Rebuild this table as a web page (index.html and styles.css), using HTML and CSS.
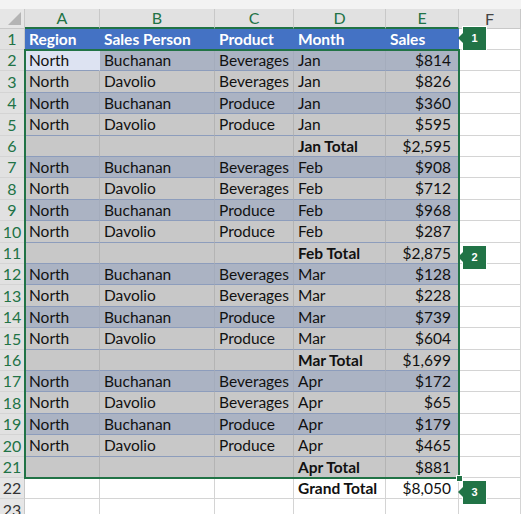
FILE: index.html
```html
<!DOCTYPE html>
<html>
<head>
<meta charset="utf-8">
<link rel="stylesheet" href="styles.css">
</head>
<body>
<div class="app">
  <div class="topbar"></div>
  <div class="sheet">
    <div class="row colhdr">
      <div class="corner"><span class="tri"></span></div>
      <div class="ch sel">A</div><div class="ch sel">B</div><div class="ch sel">C</div><div class="ch sel">D</div><div class="ch sel">E</div><div class="ch">F</div>
    </div>
    <div class="row title"><div class="rh sel">1</div><div class="c">Region</div><div class="c">Sales Person</div><div class="c">Product</div><div class="c">Month</div><div class="c">Sales</div><div class="c blank"></div></div>

    <div class="row dark"><div class="rh sel">2</div><div class="c active">North</div><div class="c">Buchanan</div><div class="c">Beverages</div><div class="c">Jan</div><div class="c num">$814</div><div class="c blank"></div></div>
    <div class="row light t"><div class="rh sel">3</div><div class="c">North</div><div class="c">Davolio</div><div class="c">Beverages</div><div class="c">Jan</div><div class="c num">$826</div><div class="c blank"></div></div>
    <div class="row dark"><div class="rh sel">4</div><div class="c">North</div><div class="c">Buchanan</div><div class="c">Produce</div><div class="c">Jan</div><div class="c num">$360</div><div class="c blank"></div></div>
    <div class="row light t"><div class="rh sel">5</div><div class="c">North</div><div class="c">Davolio</div><div class="c">Produce</div><div class="c">Jan</div><div class="c num">$595</div><div class="c blank"></div></div>
    <div class="row light"><div class="rh sel">6</div><div class="c"></div><div class="c"></div><div class="c"></div><div class="c b">Jan Total</div><div class="c num">$2,595</div><div class="c blank"></div></div>

    <div class="row dark"><div class="rh sel">7</div><div class="c">North</div><div class="c">Buchanan</div><div class="c">Beverages</div><div class="c">Feb</div><div class="c num">$908</div><div class="c blank"></div></div>
    <div class="row light t"><div class="rh sel">8</div><div class="c">North</div><div class="c">Davolio</div><div class="c">Beverages</div><div class="c">Feb</div><div class="c num">$712</div><div class="c blank"></div></div>
    <div class="row dark"><div class="rh sel">9</div><div class="c">North</div><div class="c">Buchanan</div><div class="c">Produce</div><div class="c">Feb</div><div class="c num">$968</div><div class="c blank"></div></div>
    <div class="row light t"><div class="rh sel">10</div><div class="c">North</div><div class="c">Davolio</div><div class="c">Produce</div><div class="c">Feb</div><div class="c num">$287</div><div class="c blank"></div></div>
    <div class="row light"><div class="rh sel">11</div><div class="c"></div><div class="c"></div><div class="c"></div><div class="c b">Feb Total</div><div class="c num">$2,875</div><div class="c blank"></div></div>

    <div class="row dark"><div class="rh sel">12</div><div class="c">North</div><div class="c">Buchanan</div><div class="c">Beverages</div><div class="c">Mar</div><div class="c num">$128</div><div class="c blank"></div></div>
    <div class="row light t"><div class="rh sel">13</div><div class="c">North</div><div class="c">Davolio</div><div class="c">Beverages</div><div class="c">Mar</div><div class="c num">$228</div><div class="c blank"></div></div>
    <div class="row dark"><div class="rh sel">14</div><div class="c">North</div><div class="c">Buchanan</div><div class="c">Produce</div><div class="c">Mar</div><div class="c num">$739</div><div class="c blank"></div></div>
    <div class="row light t"><div class="rh sel">15</div><div class="c">North</div><div class="c">Davolio</div><div class="c">Produce</div><div class="c">Mar</div><div class="c num">$604</div><div class="c blank"></div></div>
    <div class="row light"><div class="rh sel">16</div><div class="c"></div><div class="c"></div><div class="c"></div><div class="c b">Mar Total</div><div class="c num">$1,699</div><div class="c blank"></div></div>

    <div class="row dark"><div class="rh sel">17</div><div class="c">North</div><div class="c">Buchanan</div><div class="c">Beverages</div><div class="c">Apr</div><div class="c num">$172</div><div class="c blank"></div></div>
    <div class="row light t"><div class="rh sel">18</div><div class="c">North</div><div class="c">Davolio</div><div class="c">Beverages</div><div class="c">Apr</div><div class="c num">$65</div><div class="c blank"></div></div>
    <div class="row dark"><div class="rh sel">19</div><div class="c">North</div><div class="c">Buchanan</div><div class="c">Produce</div><div class="c">Apr</div><div class="c num">$179</div><div class="c blank"></div></div>
    <div class="row light t"><div class="rh sel">20</div><div class="c">North</div><div class="c">Davolio</div><div class="c">Produce</div><div class="c">Apr</div><div class="c num">$465</div><div class="c blank"></div></div>
    <div class="row light"><div class="rh sel">21</div><div class="c"></div><div class="c"></div><div class="c"></div><div class="c b">Apr Total</div><div class="c num">$881</div><div class="c blank"></div></div>

    <div class="row plain"><div class="rh">22</div><div class="c"></div><div class="c"></div><div class="c"></div><div class="c b">Grand Total</div><div class="c num">$8,050</div><div class="c"></div></div>
    <div class="row plain t"><div class="rh">23</div><div class="c"></div><div class="c"></div><div class="c"></div><div class="c"></div><div class="c"></div><div class="c"></div></div>

    <div class="selection"><span class="handle"></span></div>
    <div class="badge b1">1</div>
    <div class="badge b2">2</div>
    <div class="badge b3">3</div>
  </div>
</div>
</body>
</html>
```

FILE: styles.css
```css
* { box-sizing: border-box; }
html, body { margin: 0; padding: 0; background: #ffffff; }
body { width: 521px; height: 514px; overflow: hidden; font-family: Lato, "Open Sans", sans-serif; color: #111; }

.topbar { height: 9px; background: #f3f3f3; }

.sheet { position: relative; }

.row {
  display: grid;
  grid-template-columns: 25px 75px 115px 79px 92px 73px 62px;
  height: 21px;
}
.row.t { height: 22px; }

.colhdr { height: 20px; background: #e6e6e6; }

.corner {
  position: relative;
  border-right: 1px solid #c8c8c8;
  border-bottom: 1px solid #c8c8c8;
}
.tri {
  position: absolute;
  right: 3px;
  bottom: 3px;
  width: 0; height: 0;
  border-left: 13px solid transparent;
  border-bottom: 13px solid #b4b4b4;
}

.ch {
  font-size: 16px;
  line-height: 19px;
  text-align: center;
  color: #444;
  border-right: 1px solid #c8c8c8;
  border-bottom: 1px solid #c8c8c8;
}
.ch.sel {
  background: #e1e1e1;
  color: #217346;
  border-bottom: 2px solid #217346;
  line-height: 18px;
}

.rh {
  background: #e6e6e6;
  font-size: 16px;
  text-align: center;
  color: #333;
  line-height: 20px;
  border-right: 1px solid #c8c8c8;
  border-bottom: 1px solid #d4d4d4;
}
.t .rh { line-height: 21px; }
.rh.sel { color: #217346; background: #e1e1e1; }

.c {
  font-size: 15.5px;
  line-height: 20px;
  padding-left: 4px;
  white-space: nowrap;
  overflow: hidden;
  border-right: 1px solid #d4d4d4;
  border-bottom: 1px solid #d4d4d4;
}
.t .c { line-height: 21px; }
.num { text-align: right; padding-right: 7px; padding-left: 0; }
.b { font-weight: 700; }

.title .c {
  background: #4472c4;
  color: #fff;
  font-weight: 700;
  border-right-color: #4472c4;
  border-bottom: 1px solid #4472c4;
}
.title .c.blank { background: #fff; border-right-color: #d4d4d4; border-bottom-color: #d4d4d4; }

.dark .c { background: #abb3c3; border-right-color: #a4acbc; border-bottom: 1px solid #8d9dbc; }
.light .c { background: #c8c8c8; border-right-color: #b4b4b4; border-bottom: 1px solid #8d9dbc; }
.dark .c.blank, .light .c.blank { background: #fff; border-right-color: #d4d4d4; border-bottom-color: #d4d4d4; }
.dark .c.active { background: #dde3f2; border-right-color: #dde3f2; }

.plain .c { background: #fff; }

.selection {
  position: absolute;
  left: 24px;
  top: 40px;
  width: 436px;
  height: 430px;
  border: 2px solid #217346;
  pointer-events: none;
}
.handle {
  position: absolute;
  right: -5px;
  bottom: -5px;
  width: 7px;
  height: 7px;
  background: #217346;
  border: 1px solid #fff;
}

.badge {
  position: absolute;
  left: 463px;
  width: 23px;
  height: 23px;
  background: #217346;
  color: #fff;
  font-family: "Liberation Sans", Arial, sans-serif;
  font-weight: 700;
  font-size: 11px;
  line-height: 23px;
  text-align: center;
  outline: 1px solid #fff;
}
.badge::before {
  content: "";
  position: absolute;
  left: -5px;
  top: 6px;
  width: 0; height: 0;
  border-top: 5px solid transparent;
  border-bottom: 5px solid transparent;
  border-right: 5px solid #217346;
}
.b1 { top: 18px; }
.b2 { top: 237px; }
.b3 { top: 472px; }
```
